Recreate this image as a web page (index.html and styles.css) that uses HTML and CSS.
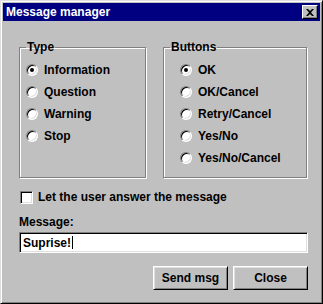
FILE: index.html
```html
<!DOCTYPE html>
<html>
<head>
  <title>Message manager</title>
  <link rel="stylesheet" href="styles.css">
</head>
<body>
  <div class="window">
    <div class="titlebar">
      <span class="title">Message manager</span>
      <button class="close-btn">
        <svg width="8" height="7" viewBox="0 0 8 7"><path d="M0 0h2l2 2 2-2h2L5 3.5 8 7H6L4 5 2 7H0l3-3.5z" fill="#000"/></svg>
      </button>
    </div>
    <div class="content">
      <div class="groups">
        <fieldset class="group group-type">
          <legend>Type</legend>
          <div class="options">
            <label class="radio-row"><span class="radio checked"></span>Information</label>
            <label class="radio-row"><span class="radio"></span>Question</label>
            <label class="radio-row"><span class="radio"></span>Warning</label>
            <label class="radio-row"><span class="radio"></span>Stop</label>
          </div>
        </fieldset>
        <fieldset class="group group-buttons">
          <legend>Buttons</legend>
          <div class="options">
            <label class="radio-row"><span class="radio checked"></span>OK</label>
            <label class="radio-row"><span class="radio"></span>OK/Cancel</label>
            <label class="radio-row"><span class="radio"></span>Retry/Cancel</label>
            <label class="radio-row"><span class="radio"></span>Yes/No</label>
            <label class="radio-row"><span class="radio"></span>Yes/No/Cancel</label>
          </div>
        </fieldset>
      </div>
      <label class="check-row"><span class="checkbox"></span>Let the user answer the message</label>
      <div class="msg-label">Message:</div>
      <div class="msg-input">Suprise!<span class="caret"></span></div>
      <div class="actions">
        <button class="btn">Send msg</button>
        <button class="btn">Close</button>
      </div>
    </div>
  </div>
</body>
</html>
```

FILE: styles.css
```css
body {
  margin: 0;
  font-family: "Liberation Sans", Arial, sans-serif;
  font-size: 12px;
  font-weight: bold;
  color: #000;
  background: #c0c0c0;
}

.window {
  width: 323px;
  height: 304px;
  box-sizing: border-box;
  background: #c0c0c0;
  border: 1px solid;
  border-color: #dfdfdf #000 #000 #dfdfdf;
  box-shadow: inset 1px 1px #fff, inset -1px -1px #808080;
  padding: 2px;
}

.titlebar {
  height: 18px;
  background: #000080;
  color: #fff;
  display: flex;
  align-items: center;
  justify-content: space-between;
  padding: 0 2px 0 3px;
  font-size: 12px;
}

.close-btn {
  width: 16px;
  height: 14px;
  padding: 0;
  background: #c0c0c0;
  border: 1px solid;
  border-color: #fff #000 #000 #fff;
  box-shadow: inset -1px -1px #808080;
  display: flex;
  align-items: center;
  justify-content: center;
}

.content {
  padding: 20px 12px 0 16px;
  display: flex;
  flex-direction: column;
}

.groups {
  display: flex;
  gap: 17px;
}

.group {
  margin: 0;
  height: 137px;
  box-sizing: border-box;
  border: 1px solid #808080;
  box-shadow: inset 1px 1px #fff, 1px 1px #fff;
  padding: 5px 0 0 0;
}

.group legend {
  padding: 0 1px;
  margin-left: 6px;
  line-height: 13px;
}

.options {
  display: flex;
  flex-direction: column;
}

.group-type {
  width: 127px;
}

.group-type .options {
  padding-left: 6px;
}

.group-buttons {
  width: 144px;
}

.group-buttons .options {
  padding-left: 16px;
}

.radio-row {
  height: 22px;
  display: flex;
  align-items: center;
  gap: 6px;
}

.radio {
  width: 12px;
  height: 12px;
  box-sizing: border-box;
  border-radius: 50%;
  border: 1px solid;
  border-color: #808080 #fff #fff #808080;
  background: #fff;
  box-shadow: inset 1px 1px #000, inset -1px -1px #dfdfdf;
  position: relative;
}

.radio.checked::after {
  content: "";
  position: absolute;
  left: 3px;
  top: 3px;
  width: 4px;
  height: 4px;
  border-radius: 50%;
  background: #000;
}

.check-row {
  margin-top: 11px;
  height: 16px;
  display: flex;
  align-items: center;
  gap: 5px;
  padding-left: 1px;
}

.checkbox {
  width: 13px;
  height: 13px;
  box-sizing: border-box;
  background: #fff;
  border: 1px solid;
  border-color: #808080 #fff #fff #808080;
  box-shadow: inset 1px 1px #000, inset -1px -1px #dfdfdf;
}

.msg-label {
  margin-top: 11px;
  line-height: 13px;
}

.msg-input {
  margin-top: 3px;
  height: 21px;
  box-sizing: border-box;
  background: #fff;
  border: 1px solid;
  border-color: #808080 #fff #fff #808080;
  box-shadow: inset 1px 1px #000, inset -1px -1px #dfdfdf;
  padding: 0 3px;
  display: flex;
  align-items: center;
}

.caret {
  width: 1px;
  height: 13px;
  background: #000;
  margin-left: 1px;
}

.actions {
  margin-top: 13px;
  display: flex;
  justify-content: flex-end;
  gap: 5px;
}

.btn {
  width: 75px;
  height: 24px;
  font: inherit;
  background: #c0c0c0;
  border: 1px solid;
  border-color: #fff #000 #000 #fff;
  box-shadow: inset 1px 1px #dfdfdf, inset -1px -1px #808080;
  padding: 0;
}
```
